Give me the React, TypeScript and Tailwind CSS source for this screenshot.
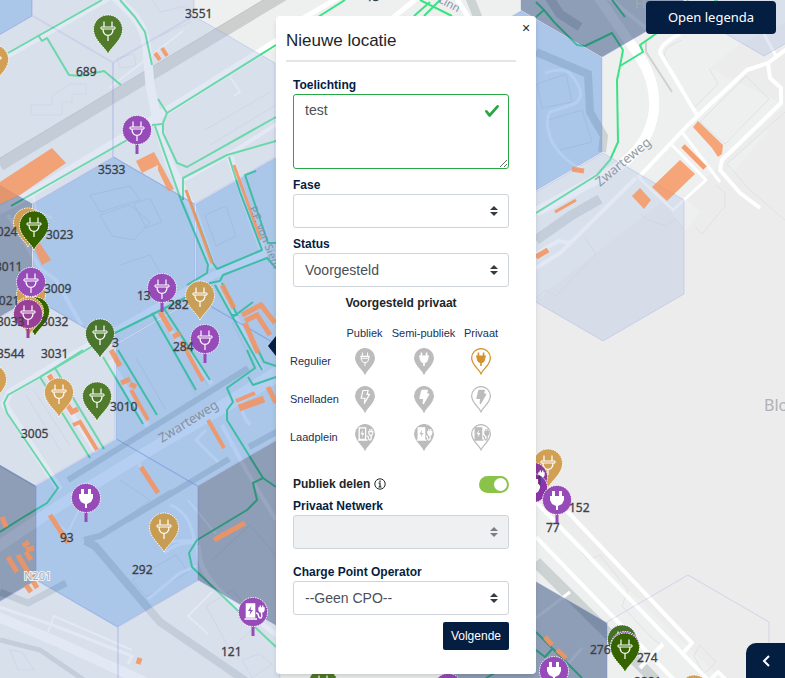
import { useState, ReactNode } from "react";

type Glyph = "plug" | "plugFilled" | "station";

type MarkerProps = {
  x: number;
  y: number;
  color: string;
  shape?: "pin" | "circle";
  glyph?: Glyph;
};

const GREEN = "#4f7b2a";
const DARK_GREEN = "#356300";
const AMBER = "#d2a055";
const PURPLE = "#964bb8";

const PIN_PATH =
  "M0 24C-3 17 -14.5 10 -14.5 -.5A14.5 14.5 0 0 1 14.5 -.5C14.5 10 3 17 0 24Z";

const HEX_PATH = "M0 -94L81 -47V47L0 94L-81 47V-47Z";

const hexes = [
  { x: -49, y: -31, level: "mid" },
  { x: 113, y: -32, level: "low" },
  { x: 32, y: 110, level: "low" },
  { x: 194, y: 110, level: "low" },
  { x: -49, y: 251, level: "high" },
  { x: 114, y: 251, level: "mid" },
  { x: 277, y: 251, level: "mid" },
  { x: 34, y: 392, level: "low" },
  { x: 197, y: 392, level: "mid" },
  { x: 359, y: 392, level: "mid" },
  { x: -45, y: 533, level: "high" },
  { x: 117, y: 533, level: "mid" },
  { x: 279, y: 533, level: "high" },
  { x: 37, y: 674, level: "low" },
  { x: 199, y: 674, level: "low" },
  { x: 521, y: 105, level: "mid" },
  { x: 602, y: -37, level: "high" },
  { x: 764, y: -38, level: "low" },
  { x: 603, y: 247, level: "low" },
  { x: 526, y: 670, level: "high" },
  { x: 688, y: 669, level: "none" },
];

const hexFill: Record<string, string> = {
  low: "fill-[#b6c8e6]/40",
  mid: "fill-[#4488dc]/40",
  high: "fill-[#1b3a71]/45",
  none: "fill-transparent",
};

const water = [
  { d: "M85 541L95 546L160 622L250 684", w: 8 },
  { d: "M84 540L100 536L172 492", w: 6 },
  { d: "M68 480L248 368", w: 6 },
  { d: "M127 520L229 459", w: 6 },
  { d: "M249 447L280 430", w: 6 },
  { d: "M0 640L40 650L84 680", w: 5 },
  { d: "M0 592L28 603L66 583", w: 7 },
  { d: "M536 52L588 74L590 112L604 136L602 152", w: 8 },
  { d: "M536 240L572 215L600 199", w: 10 },
  { d: "M536 562L655 680", w: 11 },
  { d: "M548 -4L560 14L580 27", w: 9 },
  { d: "M470 -2L478 18", w: 9 },
];

const roads = [
  { d: "M112 -6L126 8Q145 24 147 50L150 85L158 125L170 165L192 208L212 268", w: 9 },
  { d: "M-4 62L112 -4", w: 6 },
  { d: "M-4 212L20 200L155 118L280 40", w: 8 },
  { d: "M-4 548L60 505L280 370", w: 11 },
  { d: "M40 520L130 466L280 380", w: 3 },
  { d: "M-4 616L60 643L145 682", w: 10 },
  { d: "M-4 606L50 624L132 656L128 664", w: 3 },
  { d: "M48 632L54 616L132 650", w: 2 },
  { d: "M184 180L228 155L280 122", w: 4 },
  { d: "M230 157L246 204L264 254L214 275L60 362L10 392L4 404L60 490", w: 7 },
  { d: "M33 194L36 210L52 218M80 508L68 532L52 520", w: 2 },
  { d: "M8 215L40 268L56 280L82 326", w: 4 },
  { d: "M230 77L240 92L234 96M109 88L183 31", w: 2 },
  { d: "M110 360L148 426M156 312L212 384M218 282L262 370M46 374L96 452", w: 5 },
  { d: "M112 475L138 460L141 470M206 430L196 440L218 462", w: 3 },
  { d: "M164 553Q180 540 198 543M163 542L198 540M148 599L180 573L196 566", w: 3 },
  { d: "M212 592L188 616L208 634M188 500L216 534", w: 2 },
  { d: "M170 505Q190 512 194 540", w: 3 },
  { d: "M198 545Q198 575 230 600L278 636", w: 5 },
  { d: "M250 425Q236 408 246 396L276 380M222 425L246 470L276 520", w: 4 },
  { d: "M596 -6L640 57Q656 82 654 110Q650 148 610 172L536 212", w: 10 },
  { d: "M604 -6L646 28", w: 4 },
  { d: "M638 178L688 125L747 70L768 63L788 48", w: 4 },
  { d: "M697 115L660 53Q660 44 680 34", w: 4 },
  { d: "M768 63L770 78L781 88V103L722 160L720 170L740 193L760 208", w: 4 },
  { d: "M682 132L720 182M670 143L706 180L673 210L638 177", w: 3 },
  { d: "M536 268L560 253L636 178M536 254L558 241L570 243", w: 4 },
  { d: "M764 34L776 56", w: 3 },
  { d: "M536 502L710 682M536 537L676 682", w: 4 },
  { d: "M566 510L692 643L684 652M663 644L640 668M704 686L718 672L728 682", w: 4 },
  { d: "M545 73Q566 66 572 76Q588 96 574 104L550 112Q544 122 552 142Q564 162 584 170", w: 3 },
  { d: "M536 618L570 592M556 678L582 648", w: 3 },
  { d: "M300 20L345 -6M390 20L420 -4M455 -4L470 20", w: 5 },
];

const blocks = [
  "M31 105H52V96L70 84H86V94H72V102H62V115H31Z",
  "M117 58L134 54L136 66L120 68Z",
  "M100 0L150 -4L160 12L186 6L190 22L160 36",
  "M100 215L130 205L150 222L134 240L112 236ZM134 204L150 198L162 222L146 228Z",
  "M120 265L150 255L176 300M90 195L130 186L140 200L100 212Z",
  "M205 215L226 206L236 236L216 246ZM205 130L270 92M210 145L276 105",
  "M172 345L196 395M184 340L208 386M136 358L166 410M232 322L250 358",
  "M66 385L100 440M26 395L60 450M34 390L70 446",
  "M132 580L176 555L188 572L146 597ZM206 606L232 590L260 622L230 650Z",
  "M212 560L250 525L280 560M120 480L150 500L130 515",
  "M709 68L718 84L695 107L672 72L664 54Q666 46 682 40",
  "M746 76L769 99L725 144L700 122Z",
  "M785 112L727 164L750 190L785 220M716 185L725 193V206L702 234L696 228",
  "M537 84L566 74L572 102L542 108ZM548 120L582 110L592 142L560 150",
  "M640 214L648 220L666 226L676 219L684 230M585 238L596 254L556 296L545 290L536 298",
  "M575 544L588 560L600 555L628 590L622 606L650 636L662 646",
  "M700 645L716 662L704 674L694 656Z",
  "M10 650L22 652L34 670H18ZM242 660L260 654L272 664L252 678Z",
];

const cables = [
  "M8 53L102 0",
  "M38 35L42 41L47 38L69 75L80 76L104 71L121 85",
  "M120 0L135 17L145 32L152 65",
  "M158 99L167 113L276 45",
  "M167 113L163 123V133L177 163L187 167L276 117",
  "M152 125L163 124",
  "M11 206L134 136",
  "M155 126L181 200L208 265L207 273L187 285",
  "M183 200V178L227 155L276 141",
  "M229 157L240 192L262 250L217 269L213 263L186 190",
  "M256 171L245 175L268 243H276",
  "M40 377L115 333L187 297L210 283L220 281L223 275L267 258L276 268",
  "M215 285L262 370M222 283L237 315H232M233 317L253 302",
  "M152 313L196 390M163 307L210 380",
  "M103 357L143 424M118 350L157 415",
  "M83 350L40 377L8 395L4 403L7 413L58 488L47 503L22 518L0 532",
  "M40 377L90 458M55 368L104 449",
  "M247 350L255 368L227 388L233 402L227 410V420L263 478L276 487",
  "M258 350L264 362L276 366M248 377L253 385L276 377",
  "M263 478L253 483L257 500L247 510L197 540L189 553L192 567L276 647",
  "M536 213L597 175L610 160L618 142L617 80L620 66L643 52L640 45L657 33",
  "M620 66L623 50L612 33L585 46L577 45L554 22L544 10L536 2M544 10L536 17",
  "M612 0L625 17M714 1H718",
  "M536 632L582 678M536 650L545 657L553 648",
  "M318 17L345 0M414 16L430 2M424 16L440 0M420 0L452 16",
  "M486 678L500 670",
];

const parkingLots = [
  "M0 182L52 148L66 163L20 195L0 204Z",
  "M136 161L154 152L174 189L168 191L158 170V165L142 173Z",
  "M33 245L42 265L51 260L39 242Z",
  "M698 121L723 145L722 154L718 157L712 148L693 127Z",
  "M680 160L695 174L667 201L652 187Z",
  "M640 188L651 200L644 209L632 196Z",
];

const parkingStrips = [
  { d: "M155 53L160 60M162 48L167 56", w: 4 },
  { d: "M234 165L261 240M186 190L212 263", w: 3 },
  { d: "M222 285L234 308M245 323L258 353M245 321L257 315L270 335", w: 5 },
  { d: "M242 315L261 305L275 323", w: 5 },
  { d: "M160 312L171 331M173 337L180 333M111 350L120 366M121 383L130 379M130 384L136 387", w: 5 },
  { d: "M181 341L203 381M131 390L148 420M73 425L80 422L97 450", w: 4 },
  { d: "M49 375L60 394L72 412L78 409M141 467L158 493", w: 5 },
  { d: "M208 420L224 448M236 401L255 393", w: 4 },
  { d: "M239 408L264 399", w: 7 },
  { d: "M268 387L276 403M50 515L68 543M214 540L245 523", w: 5 },
  { d: "M2 517L6 527M8 557L17 572M18 555L37 588M23 546L29 542M26 550L34 548M26 552L31 560M26 585L31 592", w: 5 },
  { d: "M140 658L138 664M683 146L705 168M572 169L584 171", w: 5 },
  { d: "M555 212L576 200", w: 3 },
  { d: "M536 257L548 250M545 637L552 645M557 650L566 658", w: 5 },
];

const markers: MarkerProps[] = [
  { x: 108, y: 30, color: GREEN },
  { x: -6, y: 60, color: AMBER },
  { x: 137, y: 130, color: PURPLE, shape: "circle" },
  { x: 28, y: 223, color: AMBER },
  { x: 34, y: 226, color: DARK_GREEN },
  { x: 31, y: 295, color: AMBER },
  { x: 31, y: 282, color: PURPLE, shape: "circle" },
  { x: 35, y: 312, color: DARK_GREEN },
  { x: 29, y: 312, color: AMBER },
  { x: 28, y: 314, color: "#983f96", shape: "circle" },
  { x: 100, y: 334, color: "#49752f" },
  { x: 162, y: 288, color: PURPLE, shape: "circle" },
  { x: 200, y: 296, color: "#c79f58" },
  { x: 205, y: 339, color: PURPLE, shape: "circle" },
  { x: 59, y: 393, color: AMBER },
  { x: 97, y: 397, color: GREEN },
  { x: -8, y: 380, color: AMBER },
  { x: 86, y: 498, color: PURPLE, shape: "circle", glyph: "plugFilled" },
  { x: 164, y: 528, color: "#c79c53" },
  { x: 253, y: 612, color: PURPLE, shape: "circle", glyph: "station" },
  { x: 548, y: 464, color: AMBER },
  { x: 533, y: 477, color: "#8e3a9a", shape: "circle", glyph: "station" },
  { x: 533, y: 488, color: "#8b36a8", shape: "circle", glyph: "plugFilled" },
  { x: 557, y: 500, color: PURPLE, shape: "circle", glyph: "plugFilled" },
  { x: 622, y: 640, color: "#44702a" },
  { x: 625, y: 646, color: PURPLE, shape: "circle" },
  { x: 625, y: 648, color: DARK_GREEN },
  { x: 554, y: 671, color: PURPLE, shape: "circle", glyph: "plugFilled" },
  { x: 694, y: 690, color: AMBER },
  { x: 323, y: 684, color: GREEN },
  { x: 448, y: 688, color: PURPLE, shape: "circle" },
];

const mapLabels = [
  { x: 185, y: 18, text: "3551" },
  { x: 76, y: 76, text: "689" },
  { x: 98, y: 174, text: "3533" },
  { x: -10, y: 236, text: "3024" },
  { x: 46, y: 239, text: "3023" },
  { x: -5, y: 271, text: "3011" },
  { x: 44, y: 293, text: "3009" },
  { x: -8, y: 305, text: "3021" },
  { x: -3, y: 326, text: "3033" },
  { x: 41, y: 326, text: "3032" },
  { x: -3, y: 358, text: "3544" },
  { x: 41, y: 358, text: "3031" },
  { x: 112, y: 347, text: "3" },
  { x: 137, y: 300, text: "13" },
  { x: 168, y: 309, text: "282" },
  { x: 173, y: 351, text: "284" },
  { x: 110, y: 411, text: "3010" },
  { x: 21, y: 438, text: "3005" },
  { x: 60, y: 542, text: "93" },
  { x: 132, y: 574, text: "292" },
  { x: 221, y: 656, text: "121" },
  { x: 366, y: 1, text: "13" },
  { x: 536, y: 485, text: "1" },
  { x: 569, y: 512, text: "152" },
  { x: 546, y: 532, text: "77" },
  { x: 590, y: 654, text: "276" },
  { x: 637, y: 662, text: "274" },
  { x: 634, y: 686, text: "2881" },
];

// White glyphs, drawn around the centre of the marker's head
function MarkerGlyph({ glyph, ink }: { glyph: Glyph; ink: string }) {
  if (glyph === "station") {
    return (
      <g fill="none" stroke="#fff" strokeWidth={1.4}>
        <path d="M-6.500 -8H1.500V5H-6.500ZM-8.500 7H4" fill="#fff" strokeWidth={1.6} />
        <path d="M3 1C7 1 4 6 7.500 6C10 6 8 1 8.500 -1" />
        <path d="M6 -4H11V-2Q10.500 0 8.500 0Q6.500 0 6 -2ZM7.300 -4V-6.500M9.700 -4V-6.500" fill="#fff" />
        <path d="M-1.500 -6L-5 -1H-2.500L-3.500 3L0 -2H-2.500Z" fill={ink} stroke="none" />
      </g>
    );
  }
  if (glyph === "plugFilled") {
    return (
      <path
        d="M-5 -9H-2V-4H2V-9H5V-4H7V0L5 4L1 6V10H-1V6L-5 4L-7 0V-4H-5Z"
        fill="#fff"
      />
    );
  }
  return (
    <g fill="none" stroke="#fff" strokeWidth={1.2}>
      <path d="M-4 -8.500V-3M4 -8.500V-3" />
      <path d="M-7 -3H7V-1H-7Z" strokeWidth={1} />
      <path d="M-5 -1C-5.500 7.500 5.500 7.500 5 -1M0 5.500V11" />
    </g>
  );
}

function Marker({ x, y, color, shape = "pin", glyph = "plug" }: MarkerProps) {
  return (
    <g transform={`translate(${x} ${y})`}>
      {shape === "circle" ? (
        <>
          <path d="M0 12V24" stroke={color} strokeWidth={3} />
          <circle r={14.5} fill={color} stroke="#fff" strokeDasharray="1.500 1" />
        </>
      ) : (
        <path d={PIN_PATH} fill={color} stroke="#fff" strokeDasharray="1.500 1" />
      )}
      <MarkerGlyph glyph={glyph} ink={color} />
    </g>
  );
}

function MapCanvas() {
  return (
    <svg
      viewBox="0 0 785 678"
      preserveAspectRatio="xMidYMid slice"
      className="absolute inset-0 h-full w-full"
      role="img"
      aria-label="Kaart met laadlocaties"
    >
      <rect width="785" height="678" fill="#ececec" />
      <path
        d="M0 0H785V110L684 232L664 200L536 300V500L720 678H0Z"
        fill="#eef0f0"
      />
      <path d="M709 68L740 44L790 20V110L727 164L760 220L720 230L684 198L785 105Z" fill="#ececec" />
      <g fill="none" stroke="#dfe2e3">
        {blocks.map((d) => (
          <path key={d} d={d} />
        ))}
        <path d="M0 165L290 -9" stroke="#cdcfcf" strokeWidth={12} />
        <path d="M0 158L290 -16" stroke="#bfc2c3" />
        <path d="M646 40V52L672 92" stroke="#cfd1d1" strokeWidth={2} />
        {water.map(({ d, w }) => (
          <path key={d} d={d} stroke="#cdd2d3" strokeWidth={w} />
        ))}
        {roads.map(({ d, w }) => (
          <path key={d} d={d} stroke="#ffffff" strokeWidth={w} strokeLinejoin="round" />
        ))}
        {cables.map((d) => (
          <path key={d} d={d} stroke="#3be283" strokeWidth={2} strokeLinejoin="round" />
        ))}
      </g>
      {hexes.map(({ x, y, level }) => (
        <path
          key={`${x},${y}`}
          d={HEX_PATH}
          transform={`translate(${x} ${y})`}
          className={hexFill[level]}
          stroke="#7b86dd"
          strokeOpacity={0.3}
          strokeWidth={0.8}
        />
      ))}
      <g fill="#f8925a" fillOpacity={0.8}>
        {parkingLots.map((d) => (
          <path key={d} d={d} />
        ))}
      </g>
      <g fill="none" stroke="#f4935f" strokeOpacity={0.88}>
        {parkingStrips.map(({ d, w }) => (
          <path key={d} d={d} strokeWidth={w} />
        ))}
      </g>
      <g className="fill-[#8492a3] font-['Noto_Sans',sans-serif] text-[13px]">
        <text transform="translate(162 443) rotate(-32)">Zwarteweg</text>
        <text transform="translate(600 187) rotate(-40)" className="fill-[#949a9e]">
          Zwarteweg
        </text>
        <text transform="translate(249 208) rotate(68)" className="text-[11px]">
          P.F. von Siem
        </text>
        <text transform="translate(438 2) rotate(28)" className="text-[11px]">
          Linn
        </text>
        <text x="635" y="8" className="fill-[#a4a9b0]">
          Florapark
        </text>
        <text
          x="24"
          y="580"
          className="fill-[#a9afba] text-[11px]"
          stroke="#f1f1f1"
          strokeWidth={2}
          paintOrder="stroke"
        >
          N201
        </text>
        <text x="764" y="411" className="fill-[#b0b2b3] text-[16px]">
          Bloe
        </text>
      </g>
      {markers.map((marker) => (
        <Marker key={`${marker.x},${marker.y}`} {...marker} />
      ))}
      <g
        className="fill-[#3c4148] font-['Noto_Sans',sans-serif] text-[12px]"
        stroke="#3c4148"
        strokeWidth={0.3}
      >
        {mapLabels.map(({ x, y, text }) => (
          <text key={text + x} x={x} y={y}>
            {text}
          </text>
        ))}
      </g>
    </svg>
  );
}

type FieldProps = {
  id: string;
  label: string;
  className?: string;
  children: ReactNode;
};

function Field({ id, label, className = "mt-[7px]", children }: FieldProps) {
  return (
    <div className={className}>
      <label htmlFor={id} className="block text-[12px] leading-[18px] font-bold text-[#041e42]">
        {label}
      </label>
      {children}
    </div>
  );
}

type SelectBoxProps = {
  id: string;
  options: string[];
  disabled?: boolean;
};

function SelectBox({ id, options, disabled = false }: SelectBoxProps) {
  return (
    <div className="relative">
      <select
        id={id}
        disabled={disabled}
        className="block h-[34px] w-full appearance-none rounded-[3px] border border-[#ced4da] bg-white px-[11px] text-[14px] text-[#495057] disabled:bg-[#eff0f2]"
      >
        {options.map((option) => (
          <option key={option}>{option}</option>
        ))}
      </select>
      <svg
        viewBox="0 0 8 10"
        className={`pointer-events-none absolute top-3 right-[11px] h-[10px] w-2 ${
          disabled ? "fill-[#7b7f84]" : "fill-[#343a40]"
        }`}
      >
        <path d="M4 0L8 4H0ZM4 10L0 6H8Z" />
      </svg>
    </div>
  );
}

type Access = "Publiek" | "Semi-publiek" | "Privaat";

const accessTypes: Access[] = ["Publiek", "Semi-publiek", "Privaat"];
const chargeTypes = ["Regulier", "Snelladen", "Laadplein"];

function TypeIcon({ charge, access, active }: { charge: string; access: Access; active: boolean }) {
  const color = active ? "#d4922f" : "#bcbcbc";
  const hollow = access === "Privaat";
  const outline = access === "Publiek";
  const ink = hollow ? color : "#fff";
  const paper = hollow ? "#fff" : color;

  return (
    <svg viewBox="-15.500 -15.500 31 41" className="mx-auto block h-[27px] w-5">
      <path
        d={PIN_PATH}
        fill={paper}
        stroke={color}
        strokeWidth={2}
      />
      {charge === "Regulier" && (
        <>
          <path
            d="M-4 -9V-3M4 -9V-3M-7.500 -3H7.500M0 6V12"
            fill="none"
            stroke={ink}
            strokeWidth={outline ? 1.5 : 2.5}
          />
          <path
            d="M-6 -3H6V1Q5 7 0 7Q-5 7 -6 1Z"
            fill={outline ? "none" : ink}
            stroke={ink}
            strokeWidth={1.5}
          />
          {outline && <path d="M-6 0H6" stroke={ink} strokeWidth={1.5} />}
        </>
      )}
      {charge === "Snelladen" && (
        <path
          d="M-3 -9H5L3 -3H7L-1 11L0 3H-6Z"
          fill={outline ? "none" : ink}
          stroke={ink}
          strokeWidth={outline ? 1.8 : 2.4}
          strokeLinejoin="round"
        />
      )}
      {charge === "Laadplein" && (
        <>
          <path
            d="M-9 -10H1V8H-9Z"
            fill={outline ? "none" : ink}
            stroke={ink}
            strokeWidth={2}
          />
          <path d="M-11 9H4M3 3C7 2 4 9 7.500 9C11 9 9 3 9.500 0" fill="none" stroke={ink} strokeWidth={2} />
          <path
            d="M6 -4H12V-1Q11 2 9 2Q7 2 6 -1ZM7.500 -4V-8M10.500 -4V-8"
            fill={outline ? "none" : ink}
            stroke={ink}
            strokeWidth={1.8}
          />
          <path
            d="M-3 -7L-7 0H-4L-5 5L-1 -2H-4Z"
            fill={outline ? ink : paper}
          />
        </>
      )}
    </svg>
  );
}

function TypePicker() {
  const [selected, setSelected] = useState("Regulier-Privaat");

  return (
    <table className="mt-3 -ml-[3px] w-[211px] table-fixed text-[11px] text-[#1c3156]">
      <thead>
        <tr className="h-[18px] leading-[18px]">
          <td className="w-[53px]" />
          <th className="w-[43px] font-normal whitespace-nowrap">Publiek</th>
          <th className="w-[75px] font-normal whitespace-nowrap">Semi-publiek</th>
          <th className="w-10 font-normal whitespace-nowrap">Privaat</th>
        </tr>
      </thead>
      <tbody>
        {chargeTypes.map((charge) => (
          <tr key={charge} className="h-[38px]">
            <th className="text-left font-normal">{charge}</th>
            {accessTypes.map((access) => {
              const value = `${charge}-${access}`;
              return (
                <td key={access}>
                  <label className="relative block cursor-pointer">
                    <input
                      type="radio"
                      name="laadtype"
                      aria-label={`${charge} ${access}`}
                      className="sr-only"
                      checked={selected === value}
                      onChange={() => setSelected(value)}
                    />
                    <TypeIcon charge={charge} access={access} active={selected === value} />
                  </label>
                </td>
              );
            })}
          </tr>
        ))}
      </tbody>
    </table>
  );
}

function LocationForm() {
  const [shared, setShared] = useState(true);

  return (
    <section className="relative w-[260px] rounded bg-white shadow-md" aria-labelledby="form-title">
      <span className="absolute top-[320px] -left-2 h-0 w-0 border-y-10 border-r-8 border-y-transparent border-r-[#041e42]" />
      <button
        type="button"
        aria-label="Sluiten"
        className="absolute top-1 right-1 flex h-4 w-3 items-center justify-center text-[14px] text-[#212529]"
      >
        ×
      </button>
      <header className="mr-5 ml-[10px] border-b-2 border-[#e4e5e7] pt-[13px] pb-[7px]">
        <h1 id="form-title" className="text-[17px] leading-6 text-[#212529]">
          Nieuwe locatie
        </h1>
      </header>
      <form className="pr-[27px] pb-6 pl-[17px]" onSubmit={(e) => e.preventDefault()}>
        <Field id="toelichting" label="Toelichting" className="pt-[14px]">
          <div className="relative">
            <textarea
              id="toelichting"
              defaultValue="test"
              className="block h-[75px] w-full resize-y rounded-[3px] border border-[#28a745] bg-white py-[5px] pr-9 pl-[11px] text-[14px] leading-5 text-[#495057]"
            />
            <svg
              viewBox="0 0 8 8"
              className="pointer-events-none absolute top-[9px] right-[9px] h-4 w-4 fill-[#28a745]"
            >
              <path d="M2.300 6.730L.6 4.530c-.4-1.040.46-1.400 1.100-.8l1.100 1.400 3.400-3.800c.6-.63 1.600-.27 1.200.7l-4 4.600c-.43.5-.8.4-1.100.1z" />
            </svg>
          </div>
        </Field>
        <Field id="fase" label="Fase">
          <SelectBox id="fase" options={[""]} />
        </Field>
        <Field id="status" label="Status">
          <SelectBox id="status" options={["Voorgesteld"]} />
        </Field>
        <h2 className="mt-[7px] text-center text-[12px] leading-[18px] font-bold text-[#212529]">
          Voorgesteld privaat
        </h2>
        <TypePicker />
        <div className="mt-[19px] flex h-[18px] items-center justify-between text-[12px] font-bold text-[#212529]">
          <label htmlFor="delen" className="flex items-center gap-1">
            Publiek delen
            <svg viewBox="0 0 12 12" className="h-3 w-3" fill="none" stroke="currentColor">
              <circle cx="6" cy="6" r="5.200" />
              <path d="M6 2.500V4M4.500 5H6V9M4.500 9H7.500" strokeWidth={1.2} />
            </svg>
          </label>
          <input
            id="delen"
            type="checkbox"
            role="switch"
            checked={shared}
            onChange={(e) => setShared(e.target.checked)}
            className="h-[17px] w-[30px] cursor-pointer appearance-none rounded-full bg-gray-300 before:m-[2px] before:block before:h-[13px] before:w-[13px] before:rounded-full before:bg-white checked:bg-[#8bc34a] checked:before:ml-[15px]"
          />
        </div>
        <Field id="netwerk" label="Privaat Netwerk" className="mt-1">
          <SelectBox id="netwerk" options={[""]} disabled />
        </Field>
        <Field id="cpo" label="Charge Point Operator" className="mt-[14px]">
          <SelectBox id="cpo" options={["--Geen CPO--"]} />
        </Field>
        <div className="mt-[7px] flex justify-end">
          <button
            type="submit"
            className="h-7 rounded-[2px] bg-[#041e42] px-2 text-[12px] text-white"
          >
            Volgende
          </button>
        </div>
      </form>
    </section>
  );
}

function App() {
  return (
    <div className="relative min-h-screen overflow-hidden font-['Liberation_Sans',sans-serif]">
      <MapCanvas />
      <main className="relative flex justify-center pt-4 pl-[27px]">
        <LocationForm />
      </main>
      <button
        type="button"
        className="absolute top-px right-[9px] h-[33px] w-[130px] rounded bg-[#041e42] font-['Noto_Sans',sans-serif] text-[13px] text-white"
      >
        Open legenda
      </button>
      <button
        type="button"
        aria-label="Paneel openen"
        className="absolute right-0 bottom-0 flex h-[35px] w-[39px] items-center justify-center rounded-tl-[10px] bg-[#041e42]"
      >
        <svg viewBox="0 0 8 12" className="h-3 w-2" fill="none" stroke="#fff" strokeWidth={2}>
          <path d="M7 1L2 6L7 11" />
        </svg>
      </button>
    </div>
  );
}

export default App;
